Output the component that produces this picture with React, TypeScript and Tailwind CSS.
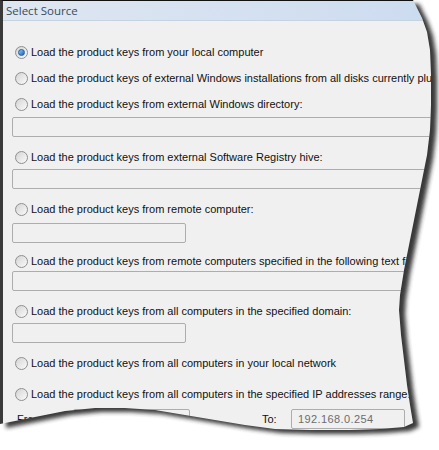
import React from 'react';

const ui = { fontFamily: '"Liberation Sans", Arial, sans-serif' };
const title = { fontFamily: '"Open Sans", "Noto Sans", sans-serif' };

// content edge of the torn screenshot, clockwise from the top
const tear =
  'M0,0 L413,0 L417,8 L422,18 L427,32 L430,50 L431,75 L431,105 L430,130 L427,155 L422,180 L416,210 L410,240 L404,270 L400,295 L399,310 L401,335 L404,360 L407,385 L410,405 L413,423 L404,427 L380,429 L350,430 L310,430 L275,429 L245,425 L215,420 L185,415 L155,410 L125,408 L95,408 L65,411 L40,416 L20,420 L0,424 Z';

const Radio: React.FC<{ checked?: boolean }> = ({ checked }) => (
  <span className="flex h-[13px] w-[13px] shrink-0 items-center justify-center rounded-full border border-[#8e8f8f] bg-gradient-to-br from-[#d4d4d4] to-[#fbfbfb]">
    {checked && (
      <span className="h-[7px] w-[7px] rounded-full border border-[#1c5fa8] bg-gradient-to-br from-[#8ccaf7] to-[#1c5fb8]" />
    )}
  </span>
);

const Option: React.FC<{ label: string; checked?: boolean; className?: string }> = ({ label, checked, className }) => (
  <div className={`ml-[12px] flex h-[16px] items-center gap-[3px] whitespace-nowrap ${className ?? ''}`}>
    <Radio checked={checked} />
    <span className="text-[11px] leading-none text-[#111]">{label}</span>
  </div>
);

const Field: React.FC<{ className?: string; children?: React.ReactNode }> = ({ className, children }) => (
  <div className={`flex h-[20px] shrink-0 items-center rounded-[2px] border border-[#adadad] bg-[#f0f0f0] px-[6px] ${className ?? ''}`}>
    {children}
  </div>
);

export default function App() {
  return (
    <div className="relative h-[450px] w-[439px] overflow-hidden bg-white" style={ui}>
      <div className="w-[470px] h-[450px] border-l-[3px] border-t border-l-[#3a3a3a] border-t-[#111] bg-[#f0f0f0]">
        <div className="flex h-[20px] items-center border-b border-[#c5d2df] bg-gradient-to-r from-[#dfe7f1] to-[#cadbef] pl-[3px]">
          <span className="text-[11.5px] text-[#3a4b5c]" style={title}>Select Source</span>
        </div>

        <div className="flex flex-col">
          <Option className="mt-[23px]" checked label="Load the product keys from your local computer" />
          <Option className="mt-[10px]" label="Load the product keys of external Windows installations from all disks currently plugged to your computer" />
          <Option className="mt-[10px]" label="Load the product keys from external Windows directory:" />
          <Field className="ml-[9px] mt-[5px] w-[450px]" />
          <Option className="mt-[12px]" label="Load the product keys from external Software Registry hive:" />
          <Field className="ml-[9px] mt-[4px] w-[450px]" />
          <Option className="mt-[12px]" label="Load the product keys from remote computer:" />
          <Field className="ml-[9px] mt-[6px] w-[174px]" />
          <Option className="mt-[10px]" label="Load the product keys from remote computers specified in the following text file:" />
          <Field className="ml-[9px] mt-[2px] h-[19px] w-[450px]" />
          <Option className="mt-[12px]" label="Load the product keys from all computers in the specified domain:" />
          <Field className="ml-[9px] mt-[4px] w-[174px]" />
          <Option className="mt-[12px]" label="Load the product keys from all computers in your local network" />
          <Option className="mt-[15px]" label="Load the product keys from all computers in the specified IP addresses range:" />

          <div className="mt-[7px] flex items-center text-[11px] text-[#111]">
            <span className="ml-[14px] w-[56px]">From:</span>
            <Field className="w-[117px]">
              <span className="text-[#6d6d6d]">192.168.0.1</span>
            </Field>
            <span className="ml-[72px] w-[29px]">To:</span>
            <Field className="w-[114px]">
              <span className="tracking-[0.4px] text-[#6d6d6d]">192.168.0.254</span>
            </Field>
          </div>
        </div>
      </div>

      {/* torn edge with drop shadow */}
      <svg className="pointer-events-none absolute inset-0" width="439" height="450" viewBox="0 0 439 450">
        <defs>
          <clipPath id="outside">
            <path d={`M0,0 H439 V450 H0 Z ${tear}`} clipRule="evenodd" />
          </clipPath>
          <filter id="soft" x="-10%" y="-10%" width="120%" height="120%">
            <feGaussianBlur stdDeviation="2.2" />
          </filter>
        </defs>
        <path d={`M0,0 H439 V450 H0 Z ${tear}`} fill="#fff" fillRule="evenodd" />
        <g clipPath="url(#outside)">
          <path d={tear} fill="#2e2e2e" opacity="0.95" filter="url(#soft)" transform="translate(6,4)" />
        </g>
      </svg>
    </div>
  );
}
